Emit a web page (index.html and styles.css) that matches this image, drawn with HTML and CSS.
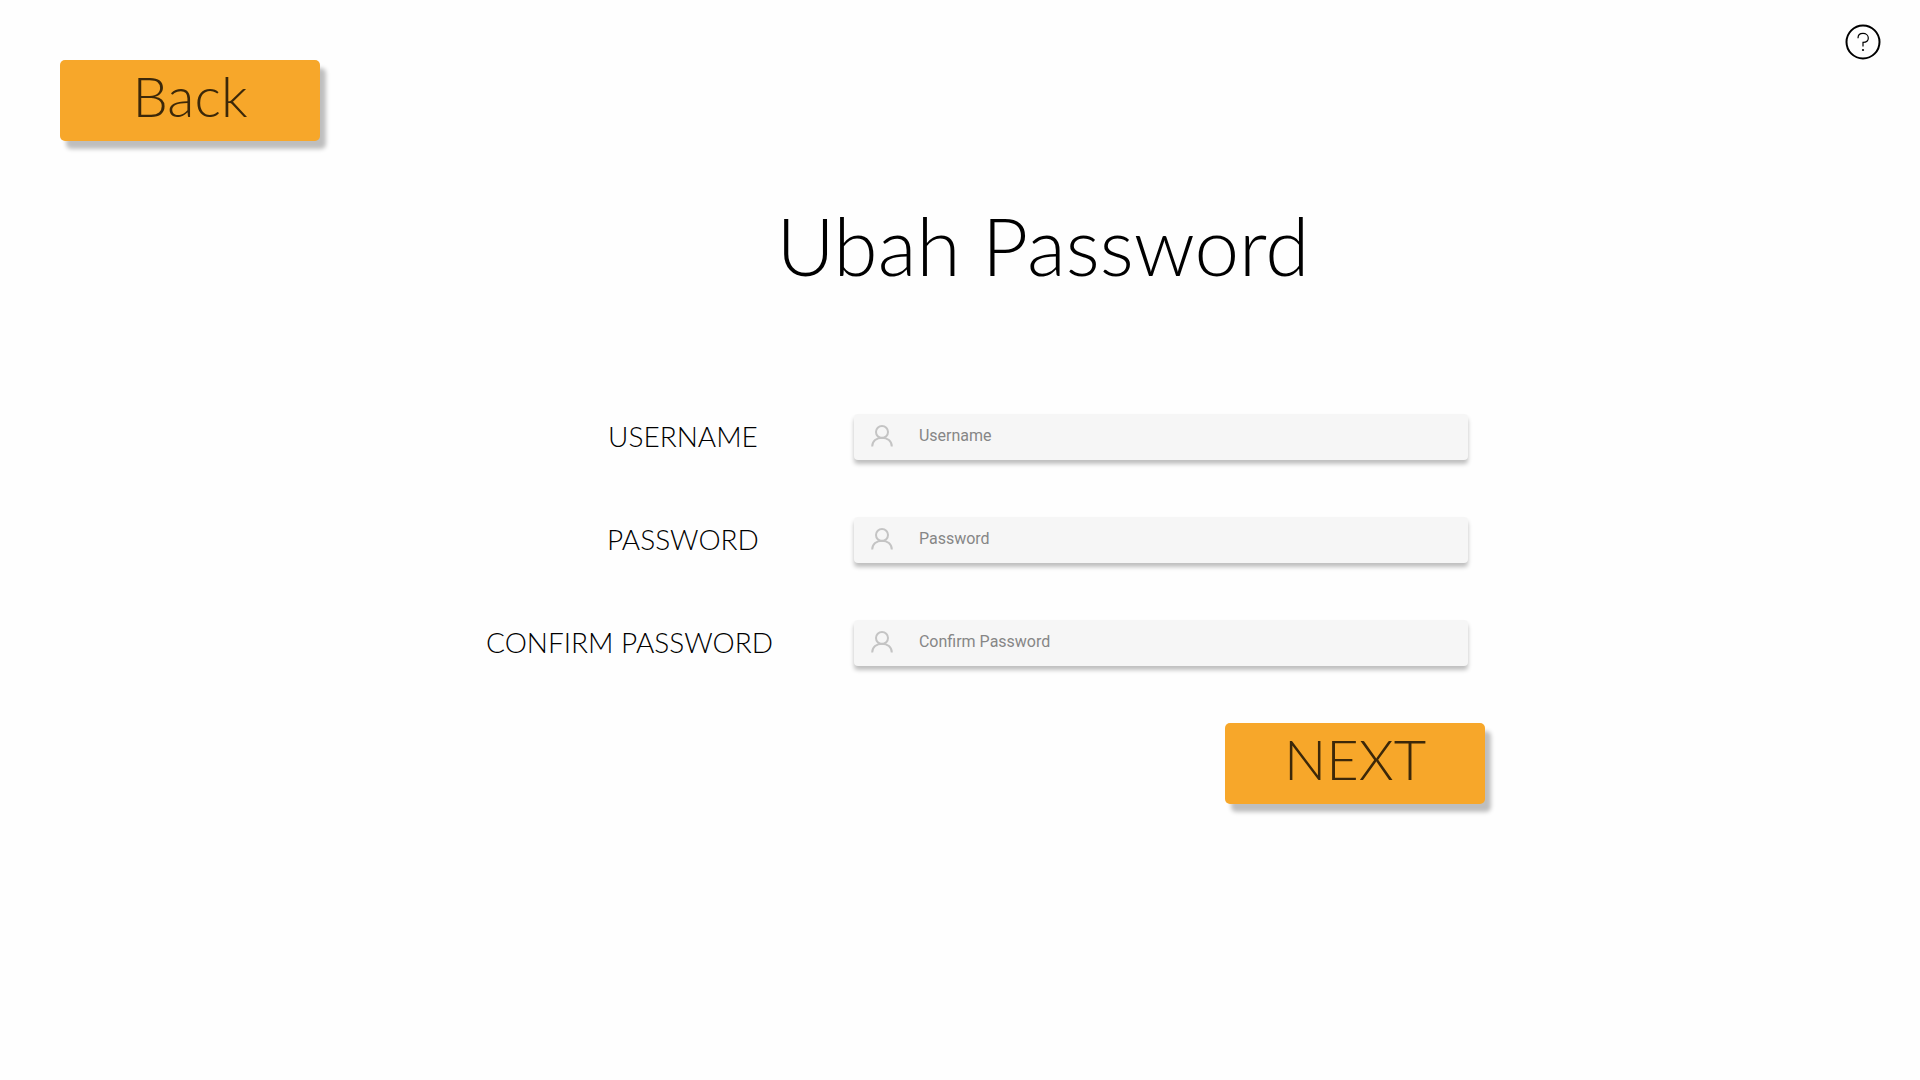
FILE: index.html
```html
<!DOCTYPE html>
<html lang="id">
<head>
  <meta charset="utf-8">
  <meta name="viewport" content="width=device-width, initial-scale=1">
  <title>Ubah Password</title>
  <link rel="stylesheet" href="styles.css">
</head>
<body>
  <svg class="sprite" aria-hidden="true">
    <symbol id="icon-user" viewBox="0 0 22 22">
      <circle cx="11" cy="7" r="6"/>
      <path d="M1.2 21.5C1.2 16 5.6 12.8 11 12.8S20.8 16 20.8 21.5"/>
    </symbol>
  </svg>

  <header class="topbar">
    <button class="button" type="button">Back</button>
    <button class="help" type="button" aria-label="Help">
      <svg class="help-icon" viewBox="0 0 36 36" aria-hidden="true">
        <circle class="help-ring" cx="18" cy="18" r="16.5"/>
        <path class="help-hook" d="M13 14.2C13 11 15.2 9.4 18 9.4S23.3 11.2 23.3 14C23.3 17 21.2 18.4 18 18.4V22.4"/>
        <circle class="help-dot" cx="18" cy="26" r="1.1"/>
      </svg>
    </button>
  </header>

  <main class="content">
    <h1 class="title">Ubah Password</h1>
    <form class="form">
      <div class="row">
        <label class="label" for="username"><span class="label-text">USERNAME</span></label>
        <div class="field">
          <svg class="field-icon" aria-hidden="true"><use href="#icon-user"/></svg>
          <input class="input" id="username" type="text" placeholder="Username">
        </div>
      </div>
      <div class="row">
        <label class="label" for="password"><span class="label-text">PASSWORD</span></label>
        <div class="field">
          <svg class="field-icon" aria-hidden="true"><use href="#icon-user"/></svg>
          <input class="input" id="password" type="password" placeholder="Password">
        </div>
      </div>
      <div class="row">
        <label class="label" for="confirm"><span class="label-text">CONFIRM PASSWORD</span></label>
        <div class="field">
          <svg class="field-icon" aria-hidden="true"><use href="#icon-user"/></svg>
          <input class="input" id="confirm" type="password" placeholder="Confirm Password">
        </div>
      </div>
      <div class="actions">
        <button class="button" type="submit">NEXT</button>
      </div>
    </form>
  </main>
</body>
</html>
```
FILE: styles.css
```css
* {
  box-sizing: border-box;
}

body {
  min-height: 100vh;
  margin: 0;
  background: #fefefe;
  color: #000;
  font-family: Lato, "Open Sans", sans-serif;
  font-weight: 300;
}

.sprite {
  display: none;
}

.topbar {
  display: flex;
  justify-content: space-between;
  align-items: flex-start;
  padding: 24px 39px 0 60px;
}

.topbar .button {
  margin-top: 36px;
}

.button {
  width: 260px;
  height: 81px;
  padding: 0 0 10px;
  border: 0;
  border-radius: 5px;
  background: #f7a72a;
  box-shadow: 6px 8px 4px rgba(0, 0, 0, 0.25);
  color: #3c2809;
  font: inherit;
  font-size: 56px;
  line-height: 68px;
  cursor: pointer;
}

.help {
  padding: 0;
  border: 0;
  background: none;
  line-height: 0;
  cursor: pointer;
}

.help-icon {
  width: 36px;
  height: 36px;
  fill: none;
  stroke: #000;
}

.help-ring {
  stroke-width: 2;
}

.help-hook {
  stroke-width: 1.2;
}

.help-dot {
  fill: #000;
  stroke: none;
}

.content {
  width: 54.2%;
  margin-left: auto;
  margin-right: 22.65%;
  padding: 56px 0 40px;
}

.title {
  margin: 0;
  padding-left: 156px;
  font-size: 80px;
  font-weight: 300;
  line-height: 96px;
  text-align: center;
}

.form {
  display: flex;
  flex-direction: column;
  gap: 57px;
  padding-top: 121px;
}

.row {
  display: flex;
  align-items: center;
  gap: 81px;
  padding-right: 17px;
}

.label {
  flex: 1;
  display: flex;
  justify-content: flex-end;
  padding-bottom: 2px;
  font-size: 28px;
  line-height: 36px;
  white-space: nowrap;
}

.label-text {
  min-width: 180px;
  text-align: center;
}

.field {
  flex: 0 0 60%;
  display: flex;
  align-items: center;
  gap: 26px;
  height: 46px;
  padding: 0 17px;
  border-radius: 4px;
  background: #f6f6f6;
  box-shadow: 0 4px 4px rgba(0, 0, 0, 0.25);
}

.field-icon {
  flex: none;
  width: 22px;
  height: 22px;
  margin-bottom: 2px;
  fill: none;
  stroke: #c4c4c4;
  stroke-width: 2;
}

.input {
  flex: 1;
  min-width: 0;
  padding: 0 0 2px;
  border: 0;
  outline: 0;
  background: none;
  color: #333;
  font: 400 16px/24px Roboto, sans-serif;
}

.input::placeholder {
  color: #868686;
  opacity: 1;
}

.actions {
  display: flex;
  justify-content: flex-end;
}
```
